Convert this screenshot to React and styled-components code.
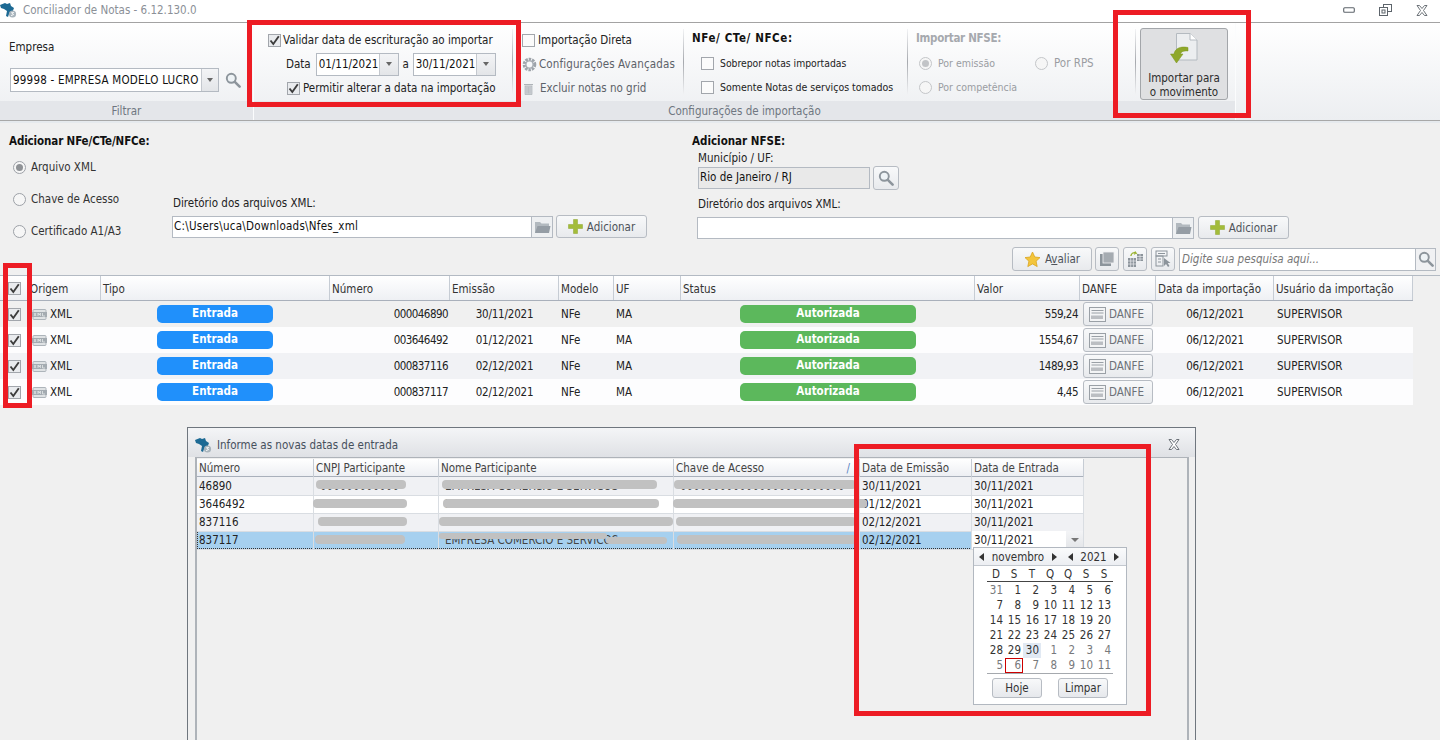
import React from "react";
import styled, { createGlobalStyle } from "styled-components";

const GlobalStyle = createGlobalStyle`
	html, body {
		margin: 0;
		padding: 0;
		height: 740px;
		overflow: hidden;
		background: #f0f0f0;
	}
	* {
		box-sizing: border-box;
	}
	body {
		font-family: "DejaVu Sans Condensed", "DejaVu Sans", "Liberation Sans", sans-serif;
		font-stretch: condensed;
		font-size: 11.5px;
		color: #222;
	}
`;

const Page = styled.div`
	position: relative;
	width: 1440px;
	height: 740px;
	overflow: hidden;
	background: #f0f0f0;
`;

const Label = styled.span`
	flex: none;
	display: inline-block;
	width: ${(p) => (p.$width ? `${p.$width}px` : "auto")};
	font-size: ${(p) => p.$size || 11.5}px;
	letter-spacing: ${(p) => p.$spacing || 0}px;
	text-align: ${(p) => p.$align || "left"};
`;

/* title bar */
const TitleBar = styled.div`
	height: 23px;
	display: flex;
	align-items: center;
	padding: 0 0 2px 0;
	background: #fff;
	border-bottom: 1px solid #a3a3a3;
`;

const TitleText = styled.span`
	margin-left: 6px;
	color: #8b9097;
	font-size: 11.5px;
`;

const WindowButtons = styled.div`
	margin-left: auto;
	display: flex;
	align-items: center;
	gap: 24px;
	padding-right: 12px;
`;

/* ribbon */
const Ribbon = styled.div`
	height: 98px;
	display: flex;
	background: linear-gradient(#fff, #eceef1);
	border-bottom: 1px solid #a8a8a8;
`;

const RibbonGroup = styled.div`
	width: ${(p) => p.$width}px;
	display: flex;
	flex-direction: column;
	border-right: 1px solid ${(p) => (p.$line ? "#fbfcfd" : "transparent")};
`;

const RibbonBody = styled.div`
	height: 78px;
	display: flex;
`;

const RibbonLabel = styled.div`
	height: 19px;
	line-height: 20px;
	text-align: center;
	color: #6f7681;
	background: #e4e6ea;
`;

const FilterColumn = styled.div`
	padding: 16px 0 0 9px;
`;

const FieldLabel = styled.div`
	color: #222;
	line-height: 17px;
	margin-top: ${(p) => p.$top || 0}px;
`;

const ComboRow = styled.div`
	display: flex;
	align-items: center;
	gap: 6px;
	margin-top: 12px;
`;

const Combo = styled.div`
	width: ${(p) => p.$width}px;
	height: ${(p) => p.$height || 24}px;
	display: flex;
	background: #fff;
	border: 1px solid #b4bac2;
	margin-left: ${(p) => p.$left || 0}px;
`;

const ComboText = styled.div`
	flex: 1;
	padding-left: 2px;
	line-height: ${(p) => p.$line || 22}px;
	letter-spacing: ${(p) => p.$spacing || 0}px;
	white-space: nowrap;
	overflow: hidden;
	color: #111;
`;

const ComboArrow = styled.div`
	width: ${(p) => p.$width || 17}px;
	display: flex;
	align-items: center;
	justify-content: center;
	background: linear-gradient(#f3f4f6, #e3e5e8);
	border-left: 1px solid #c4c8ce;
	&::after {
		content: "";
		border-left: 3.5px solid transparent;
		border-right: 3.5px solid transparent;
		border-top: 4px solid #666;
	}
`;

const RibbonColumn = styled.div`
	width: ${(p) => p.$width}px;
	padding: 5px 0 0 ${(p) => p.$pad || 0}px;
	position: relative;
	&::after {
		content: "";
		display: ${(p) => (p.$sep ? "block" : "none")};
		position: absolute;
		right: 0;
		top: 6px;
		bottom: 6px;
		width: 1px;
		background: linear-gradient(#f2f3f5, #a6a9ae 50%, #f2f3f5);
	}
`;

const rowTones = { muted: "#9a9da2", soft: "#5d6269" };

const RibbonRow = styled.div`
	height: 24px;
	display: flex;
	align-items: center;
	gap: ${(p) => p.$gap ?? 3}px;
	padding-left: ${(p) => p.$indent || 0}px;
	color: ${(p) => rowTones[p.$tone] || "#222"};
	white-space: nowrap;
`;

const GroupTitle = styled.div`
	height: 20px;
	line-height: 20px;
	font-weight: 700;
	letter-spacing: ${(p) => p.$spacing || 0}px;
	color: ${(p) => (p.$muted ? "#a6a9ae" : "#111")};
	margin-bottom: 3px;
`;

const CheckBox = styled.span`
	flex: none;
	width: 13px;
	height: 13px;
	display: inline-flex;
	align-items: center;
	justify-content: center;
	background: ${(p) => (p.$checked ? "#e9ebee" : "#fbfbfb")};
	border: 1px solid #a2a6ac;
`;

const Radio = styled.span`
	flex: none;
	width: 13px;
	height: 13px;
	border-radius: 50%;
	display: inline-flex;
	align-items: center;
	justify-content: center;
	background: #f6f6f6;
	border: 1px solid ${(p) => (p.$muted ? "#c4c6c9" : "#9da1a7")};
	&::after {
		content: "";
		display: ${(p) => (p.$on ? "block" : "none")};
		width: 7px;
		height: 7px;
		border-radius: 50%;
		background: ${(p) => (p.$muted ? "#c2c4c7" : "#8f9296")};
	}
`;

const ImportButton = styled.div`
	width: 88px;
	height: 72px;
	margin: 5px 0 0 4px;
	display: flex;
	flex-direction: column;
	align-items: center;
	padding-top: 4px;
	background: #dfe0e2;
	border: 1px solid #a3a6aa;
	border-radius: 3px;
	line-height: 14px;
	text-align: center;
	color: #2c2c2c;
	svg {
		margin-bottom: 7px;
	}
`;

const Band = styled.div`
	height: 2px;
	background: #e6eaee;
`;

/* add area */
const AddArea = styled.div`
	height: 124px;
	display: grid;
	grid-template-columns: 692px 1fr;
`;

const AddColumn = styled.div`
	padding: 10px 0 0 ${(p) => p.$pad || 0}px;
`;

const NfseFields = styled.div`
	padding: 1px 0 0 6px;
`;

const SectionTitle = styled.div`
	font-weight: 700;
	color: #111;
	line-height: 16px;
	letter-spacing: ${(p) => p.$spacing || 0}px;
`;

const SourceLayout = styled.div`
	display: flex;
`;

const SourceList = styled.div`
	width: 164px;
	padding: 2px 0 0 4px;
`;

const SourceRow = styled.div`
	height: 32px;
	display: flex;
	align-items: center;
	gap: 5px;
	color: #333;
`;

const DirectoryBlock = styled.div`
	padding-top: 46px;
`;

const InputRow = styled.div`
	display: flex;
	align-items: center;
	margin-top: ${(p) => p.$top || 0}px;
	margin-left: ${(p) => p.$left || 0}px;
`;

const TextInput = styled.div`
	width: ${(p) => p.$width}px;
	height: 22px;
	line-height: 19px;
	padding-left: 1px;
	letter-spacing: ${(p) => p.$spacing || 0}px;
	background: ${(p) => (p.$readOnly ? "#e9e9e9" : "#fff")};
	border: 1px solid #b4bac2;
	color: #111;
`;

const FolderButton = styled.div`
	width: 21px;
	height: 22px;
	display: flex;
	align-items: center;
	justify-content: center;
	background: #eef0f2;
	border: 1px solid #b4bac2;
	border-left: 0;
`;

const ToolButton = styled.div`
	flex: none;
	width: ${(p) => p.$width || 24}px;
	height: ${(p) => p.$height || 24}px;
	margin-left: ${(p) => p.$left || 0}px;
	margin-right: ${(p) => p.$right || 0}px;
	display: flex;
	align-items: center;
	justify-content: center;
	gap: 4px;
	background: linear-gradient(#f8f9fa, #e8eaed);
	border: 1px solid #b7bcc3;
	border-radius: 3px;
	color: #4e535a;
`;

const Toolbar = styled.div`
	height: 28px;
	display: flex;
	align-items: center;
	justify-content: flex-end;
	gap: 4px;
	padding: 0 4px 4px 0;
`;

const SearchBox = styled.div`
	width: 257px;
	height: 23px;
	display: flex;
	background: #fff;
	border: 1px solid #b4bac2;
`;

const SearchText = styled.div`
	flex: 1;
	padding-left: 2px;
	line-height: 20px;
	font-style: italic;
	color: #777;
`;

const SearchAction = styled.div`
	width: 20px;
	display: flex;
	align-items: center;
	justify-content: center;
	background: #f0f1f3;
	border-left: 1px solid #b4bac2;
`;

/* main table */
const mainColumns = "29px 72px 229px 120px 109px 55px 67px 294px 105px 76px 118px 139px";

const MainTable = styled.div`
	border-top: 1px solid #b3bac3;
`;

const MainHeader = styled.div`
	display: grid;
	grid-template-columns: ${mainColumns};
	width: 1413px;
	height: 25px;
	background: linear-gradient(#fff, #eef0f4);
	border-bottom: 1px solid #a9b0bb;
`;

const HeaderCell = styled.div`
	display: flex;
	align-items: center;
	padding: 1px 0 0 ${(p) => p.$pad ?? 2}px;
	border-right: 1px solid #c6ccd4;
	color: #333;
	white-space: nowrap;
`;

const MainRow = styled.div`
	display: grid;
	grid-template-columns: ${mainColumns};
	width: 1413px;
	height: 26px;
	background: ${(p) => p.$bg};
`;

const Cell = styled.div`
	display: flex;
	align-items: center;
	justify-content: ${(p) => p.$justify || "flex-start"};
	padding: 0 2px 0 ${(p) => p.$pad ?? 2}px;
	gap: 3px;
	letter-spacing: ${(p) => p.$spacing || 0}px;
	color: #222;
	white-space: nowrap;
`;

const Pill = styled.div`
	width: ${(p) => p.$width}px;
	height: 18px;
	margin-left: ${(p) => p.$left}px;
	line-height: 17px;
	text-align: center;
	font-weight: 700;
	color: #fff;
	border-radius: 5px;
	background: ${(p) => p.$color};
`;

const DanfeButton = styled(ToolButton)`
	color: #6d7278;
	margin-left: 1px;
	gap: 3px;
	padding-right: 3px;
`;

/* dialog */
const Dialog = styled.div`
	position: absolute;
	left: 187px;
	top: 427px;
	width: 1009px;
	height: 340px;
	background: #f0f0f0;
	border: 1px solid #6f767e;
`;

const DialogTitle = styled.div`
	height: 29px;
	display: flex;
	align-items: center;
	gap: 5px;
	padding: 4px 15px 0 7px;
	background: linear-gradient(#f4f5f7, #dfe1e5);
	color: #46505c;
	span {
		flex: 1;
	}
`;

const DialogFrame = styled.div`
	margin: 0 6px 0 7px;
	height: 300px;
	padding-top: 1px;
	background: #f0f0f0;
	border: 2px solid #aeb3b9;
	border-top-width: 1px;
	border-bottom: 0;
`;

const dialogColumns = "117px 125px 235px 186px 112px 112px";

const DialogHeader = styled.div`
	display: grid;
	grid-template-columns: ${dialogColumns};
	width: 887px;
	height: 18px;
	background: linear-gradient(#fff, #edeff3);
	border-bottom: 1px solid #a9b0bb;
`;

const DialogHeadCell = styled.div`
	padding: 0 3px 0 2px;
	line-height: 18px;
	border-right: 1px solid #c6ccd4;
	color: #444;
	display: flex;
	justify-content: space-between;
`;

const SortMark = styled.span`
	color: #5a86c4;
	padding-right: 6px;
`;

const DialogRow = styled.div`
	display: grid;
	grid-template-columns: ${dialogColumns};
	width: 887px;
	height: 18px;
	background: ${(p) => p.$bg};
	outline: ${(p) => (p.$active ? "1px dotted #333" : "none")};
	outline-offset: -1px;
`;

const DialogCell = styled.div`
	position: relative;
	padding: 0 3px 0 2px;
	line-height: 18px;
	white-space: nowrap;
	color: #222;
	border-right: 1px solid #d9dde2;
	border-bottom: 1px solid #d9dde2;
`;

const MaskedText = styled.span`
	display: block;
	overflow: hidden;
	padding-left: 4px;
	color: #444;
`;

const Blot = styled.span`
	position: absolute;
	z-index: 2;
	left: ${(p) => p.$left}px;
	top: ${(p) => p.$top}px;
	width: ${(p) => p.$width}px;
	height: ${(p) => p.$height || 9}px;
	border-radius: 4px;
	background: #c1c1c1;
`;

const EditorCell = styled(DialogCell)`
	background: #fff;
	display: flex;
	padding-right: 0;
`;

const EditorText = styled.span`
	flex: 1;
`;

const EditorArrow = styled.div`
	width: 17px;
	display: flex;
	align-items: center;
	justify-content: center;
	background: linear-gradient(#f3f4f6, #e3e5e8);
	&::after {
		content: "";
		border-left: 4px solid transparent;
		border-right: 4px solid transparent;
		border-top: 4px solid #777;
	}
`;

/* calendar popup */
const Calendar = styled.div`
	position: absolute;
	z-index: 3;
	left: 1px;
	top: 16px;
	width: 154px;
	height: 158px;
	background: #fff;
	border: 1px solid #b2b8c0;
	color: #333;
`;

const CalendarHead = styled.div`
	height: 18px;
	display: flex;
	align-items: center;
	gap: 11px;
	padding-left: 5px;
	background: linear-gradient(#fafbfc, #eceef2);
	border-bottom: 1px solid #c3c8cf;
`;

const Stepper = styled.div`
	display: flex;
	align-items: center;
	justify-content: space-between;
	width: ${(p) => p.$width}px;
`;

const Arrow = styled.i`
	display: block;
	flex: none;
	border-top: 4.5px solid transparent;
	border-bottom: 4.5px solid transparent;
	border-${(p) => (p.$left ? "right" : "left")}: 5px solid #333;
`;

const WeekGrid = styled.div`
	margin: 1px 13px 0;
	display: grid;
	grid-template-columns: repeat(7, 18px);
`;

const WeekHead = styled.div`
	height: 15px;
	line-height: 14px;
	text-align: center;
	border-bottom: 1px solid #444;
	margin-bottom: 1px;
`;

const Day = styled.div`
	height: 15px;
	line-height: 15px;
	padding-right: 2px;
	text-align: right;
	color: ${(p) => (p.$other ? "#77797c" : "#333")};
	background: ${(p) => (p.$selected ? "#e1e9f3" : "transparent")};
	outline: ${(p) => (p.$today ? "1px solid #cc0000" : "none")};
	outline-offset: -1px;
`;

const CalendarFoot = styled.div`
	margin: 0 13px;
	padding-top: 4px;
	border-top: 1px solid #a5a9ae;
	display: flex;
	justify-content: space-between;
`;

const CalendarButton = styled.div`
	margin: 0 5px;
	width: 50px;
	height: 20px;
	line-height: 18px;
	text-align: center;
	background: linear-gradient(#f8f9fa, #e6e8ec);
	border: 1px solid #b7bcc3;
	border-radius: 3px;
	color: #333;
`;

/* red marks drawn by hand over the screenshot */
const Annotation = styled.div`
	position: absolute;
	z-index: 5;
	left: ${(p) => p.$x}px;
	top: ${(p) => p.$y}px;
	width: ${(p) => p.$w}px;
	height: ${(p) => p.$h}px;
	border: 5px solid #ed1c24;
	pointer-events: none;
`;

const Tick = () => (
	<svg width="11" height="11" viewBox="0 0 11 11">
		<path d="M1.5 5.5 L4.3 9 L9.8 1.2" fill="none" stroke="#3d3d3d" strokeWidth="1.9" />
	</svg>
);

const Check = ({ checked }) => <CheckBox $checked={checked}>{checked && <Tick />}</CheckBox>;

const Logo = () => (
	<svg width="17" height="16" viewBox="0 0 17 16">
		<path d="M0 3 L5 1 L7 2 L10 1 L11 4 L14 6 L12 11 L9 12 L8 15 L6 14 L7 9 L4 7 L1 6 Z" fill="#1d6a94" />
		<circle cx="12.5" cy="12" r="3.6" fill="#a8b4bc" />
		<path d="M14 10.6 L11.5 10.8 L13.6 12.6 L11 13.6" fill="none" stroke="#fff" strokeWidth="0.9" />
	</svg>
);

const Search = ({ size = 16, color = "#8d959c" }) => (
	<svg width={size} height={size} viewBox="0 0 16 16">
		<circle cx="6.3" cy="6.3" r="4.5" fill="#eef3f6" stroke={color} strokeWidth="1.9" />
		<path d="M9.8 9.8 L14.6 14.6" stroke={color} strokeWidth="2.6" strokeLinecap="round" />
	</svg>
);

const Plus = () => (
	<svg width="15" height="15" viewBox="0 0 15 15">
		<path d="M5.5 0.5 H9.5 V5.5 H14.5 V9.5 H9.5 V14.5 H5.5 V9.5 H0.5 V5.5 H5.5 Z" fill="#a3bc3a" stroke="#8ca52c" strokeWidth="0.5" />
	</svg>
);

const Folder = () => (
	<svg width="17" height="14" viewBox="0 0 17 14">
		<path d="M1 2 H6 L7.5 3.5 H15 V13 H1 Z" fill="#b2b9bf" />
		<path d="M1 13 L3.5 6 H16.5 L15 13 Z" fill="#959da5" />
	</svg>
);

const Gear = () => (
	<svg width="15" height="15" viewBox="0 0 15 15">
		<circle cx="7.5" cy="7.5" r="5.2" fill="none" stroke="#9ea4aa" strokeWidth="3.2" strokeDasharray="2.4 0.9" />
		<circle cx="7.5" cy="7.5" r="3.6" fill="none" stroke="#a9afb5" strokeWidth="1.4" />
	</svg>
);

const Trash = () => (
	<svg width="13" height="13" viewBox="0 0 13 13">
		<path d="M2 2 H11 V3.2 H2 Z" fill="#aeb3b8" />
		<path d="M3 4 H10 V12.5 H3 Z" fill="#ccd0d4" stroke="#aeb3b8" strokeWidth="0.7" />
		<path d="M5 5 V11.5 M6.5 5 V11.5 M8 5 V11.5" stroke="#aeb3b8" strokeWidth="0.6" />
	</svg>
);

const ImportDoc = () => (
	<svg width="28" height="31" viewBox="0 0 28 31">
		<path d="M6.5 0.5 H20 L27 7 V27 H6.5 Z" fill="#eceef0" stroke="#b4bac0" />
		<path d="M20 0.5 V7 H27" fill="#fff" stroke="#b4bac0" />
		<path d="M18 14.5 L18 18 C14 17.5 11 18.5 10.5 21 H13 L6.5 30 L0.5 21 H4 C5 15 11 13 18 14.5 Z" fill="#8fa82a" stroke="#7a941f" strokeWidth="0.5" />
	</svg>
);

const Star = () => (
	<svg width="17" height="17" viewBox="0 0 17 17">
		<path d="M8.5 1 L10.8 6 L16 6.6 L12.1 10.2 L13.2 15.6 L8.5 12.9 L3.8 15.6 L4.9 10.2 L1 6.6 L6.2 6 Z" fill="#f3c53c" stroke="#d9a41f" strokeWidth="0.8" />
	</svg>
);

const CopyIcon = () => (
	<svg width="16" height="16" viewBox="0 0 16 16">
		<rect x="1" y="3" width="11" height="12" fill="#8c949b" />
		<rect x="4" y="1" width="11" height="11" fill="#a5abb1" stroke="#f0f1f3" strokeWidth="0.8" />
	</svg>
);

const GridIcon = () => (
	<svg width="17" height="17" viewBox="0 0 17 17">
		<path d="M1 7 H9 V16 H1 Z M10 3 H16 V10 H10 Z" fill="#8c949b" />
		<path d="M1 10 H9 M1 13 H9 M3.7 7 V16 M6.4 7 V16 M10 5.5 H16 M10 8 H16 M13 3 V10" stroke="#e8eaed" strokeWidth="0.7" />
		<path d="M4 5 C4 2 7 1 9 2 L8 0.5 M9 2 L7 3.2" fill="none" stroke="#9ab32f" strokeWidth="1.3" />
	</svg>
);

const PickIcon = () => (
	<svg width="17" height="18" viewBox="0 0 17 18">
		<rect x="1" y="1" width="11" height="5" fill="none" stroke="#8c949b" />
		<rect x="1" y="6" width="7" height="10" fill="none" stroke="#8c949b" />
		<path d="M3 3.5 H10 M3 9 H6 M3 12 H6" stroke="#8c949b" />
		<path d="M9 8 L9 16 L11 14 L13 17 L14.5 16 L12.7 13 L15.5 13 Z" fill="#8c949b" />
	</svg>
);

const XmlIcon = () => (
	<svg width="15" height="11" viewBox="0 0 15 11">
		<rect x="1" y="0.5" width="13" height="10" rx="1" fill="#dfe2e4" stroke="#adb4ba" />
		<rect x="0" y="3" width="15" height="5" fill="#a4abb1" />
		<path d="M2 4 L4 7 M4 4 L2 7 M6 7 V4 L7.2 6 L8.4 4 V7 M10.5 4 V7 H13" stroke="#eef0f1" strokeWidth="0.7" fill="none" />
	</svg>
);

const DanfeIcon = () => (
	<svg width="17" height="15" viewBox="0 0 17 15">
		<rect x="0.5" y="0.5" width="16" height="14" fill="#f3f4f5" stroke="#9aa0a6" />
		<path d="M2.5 3.5 H14.5 M2.5 6 H14.5" stroke="#9aa0a6" />
		<path d="M3 12 V8.5 M5 12 V8.5 M7 12 V8.5 M9 12 V8.5 M11 12 V8.5 M13 12 V8.5" stroke="#8c9298" strokeWidth="1.1" />
	</svg>
);

const Minimize = () => (
	<svg width="12" height="6" viewBox="0 0 12 6">
		<rect x="0.7" y="0.7" width="10.6" height="4.6" rx="1" fill="#fff" stroke="#5d646b" strokeWidth="1.1" />
	</svg>
);

const Restore = () => (
	<svg width="13" height="12" viewBox="0 0 13 12">
		<rect x="4.5" y="0.5" width="8" height="7" fill="#fff" stroke="#5d646b" />
		<rect x="0.5" y="3.5" width="8" height="8" fill="#fff" stroke="#5d646b" />
		<rect x="3" y="6" width="3" height="3" fill="none" stroke="#5d646b" />
	</svg>
);

const CloseIcon = () => (
	<svg width="12" height="11" viewBox="0 0 12 11">
		<path d="M1 0.5 H3.5 L6 3.5 L8.5 0.5 H11 L7.5 5.5 L11 10.5 H8.5 L6 7.5 L3.5 10.5 H1 L4.5 5.5 Z" fill="#fff" stroke="#5d646b" strokeWidth="0.9" />
	</svg>
);

const notes = [
	{ numero: "000046890", emissao: "30/11/2021", valor: "559,24", bg: "#f0f0f0" },
	{ numero: "003646492", emissao: "01/12/2021", valor: "1554,67", bg: "#fdfdfe" },
	{ numero: "000837116", emissao: "02/12/2021", valor: "1489,93", bg: "#f1f2f5" },
	{ numero: "000837117", emissao: "02/12/2021", valor: "4,45", bg: "#fdfdfe" },
];

const participantes = [
	{
		numero: "46890",
		emissao: "30/11/2021",
		bg: "#f0f1f4",
		cnpj: [{ left: 2, top: 3, width: 90 }],
		nome: [{ left: 3, top: 3, width: 215 }],
		chave: [{ left: 0, top: 3, width: 182 }],
	},
	{
		numero: "3646492",
		emissao: "01/12/2021",
		bg: "#fff",
		cnpj: [{ left: -1, top: 4, width: 94 }],
		nome: [{ left: 4, top: 4, width: 216 }],
		chave: [{ left: -1, top: 4, width: 194 }],
	},
	{
		numero: "837116",
		emissao: "02/12/2021",
		bg: "#f0f1f4",
		cnpj: [{ left: 4, top: 4, width: 89 }],
		nome: [{ left: 0, top: 4, width: 234 }],
		chave: [{ left: 2, top: 4, width: 180 }],
	},
	{
		numero: "837117",
		emissao: "02/12/2021",
		bg: "#a6d0ef",
		active: true,
		cnpj: [{ left: 1, top: 4, width: 90 }],
		nome: [
			{ left: 0, top: 2, width: 168, height: 6 },
			{ left: 167, top: 6, width: 61, height: 7 },
		],
		chave: [{ left: 3, top: 4, width: 180 }],
	},
];

const weekDays = ["D", "S", "T", "Q", "Q", "S", "S"];

const days = [
	[31, true], [1], [2], [3], [4], [5], [6],
	[7], [8], [9], [10], [11], [12], [13],
	[14], [15], [16], [17], [18], [19], [20],
	[21], [22], [23], [24], [25], [26], [27],
	[28], [29], [30, false, "selected"], [1, true], [2, true], [3, true], [4, true],
	[5, true], [6, true, "today"], [7, true], [8, true], [9, true], [10, true], [11, true],
];

const Masked = ({ text, blots }) => (
	<DialogCell>
		<MaskedText>{text}</MaskedText>
		{blots.map((b, idx) => (
			<Blot key={idx} $left={b.left} $top={b.top} $width={b.width} $height={b.height} />
		))}
	</DialogCell>
);

export default function App() {
	return (
		<Page>
			<GlobalStyle />
			<TitleBar>
				<Logo />
				<TitleText>Conciliador de Notas - 6.12.130.0</TitleText>
				<WindowButtons>
					<Minimize />
					<Restore />
					<CloseIcon />
				</WindowButtons>
			</TitleBar>

			<Ribbon>
				<RibbonGroup $width={254} $line>
					<RibbonBody>
						<FilterColumn>
							<FieldLabel>Empresa</FieldLabel>
							<ComboRow>
								<Combo $width={209} $left={1}>
									<ComboText $spacing={0.22}>99998 - EMPRESA MODELO LUCRO</ComboText>
									<ComboArrow />
								</Combo>
								<Search />
							</ComboRow>
						</FilterColumn>
					</RibbonBody>
					<RibbonLabel>Filtrar</RibbonLabel>
				</RibbonGroup>

				<RibbonGroup $width={982} $line>
					<RibbonBody>
						<RibbonColumn $width={259} $pad={14} $sep>
							<RibbonRow $gap={2}>
								<Check checked />
								<Label>Validar data de escrituração ao importar</Label>
							</RibbonRow>
							<RibbonRow $indent={18} $gap={0}>
								<Label>Data</Label>
								<Combo $width={83} $height={23} $left={5}>
									<ComboText $line={20}>01/11/2021</ComboText>
									<ComboArrow $width={19} />
								</Combo>
								<Label $width={14} $align="center">a</Label>
								<Combo $width={83} $height={23}>
									<ComboText $line={20}>30/11/2021</ComboText>
									<ComboArrow $width={19} />
								</Combo>
							</RibbonRow>
							<RibbonRow $indent={19}>
								<Check checked />
								<Label>Permitir alterar a data na importação</Label>
							</RibbonRow>
						</RibbonColumn>

						<RibbonColumn $width={171} $pad={9} $sep>
							<RibbonRow>
								<Check />
								<Label>Importação Direta</Label>
							</RibbonRow>
							<RibbonRow $tone="soft" $gap={2}>
								<Gear />
								<Label $spacing={0.12}>Configurações Avançadas</Label>
							</RibbonRow>
							<RibbonRow $tone="soft" $gap={5}>
								<Trash />
								<Label>Excluir notas no grid</Label>
							</RibbonRow>
						</RibbonColumn>

						<RibbonColumn $width={224} $pad={8} $sep>
							<GroupTitle $spacing={0.6}>NFe/ CTe/ NFCe:</GroupTitle>
							<RibbonRow $indent={9} $gap={6}>
								<Check />
								<Label $size={10.3}>Sobrepor notas importadas</Label>
							</RibbonRow>
							<RibbonRow $indent={9} $gap={6}>
								<Check />
								<Label $size={10.5}>Somente Notas de serviços tomados</Label>
							</RibbonRow>
						</RibbonColumn>

						<RibbonColumn $width={228} $pad={8} $sep>
							<GroupTitle $muted $spacing={-0.3}>Importar NFSE:</GroupTitle>
							<RibbonRow $tone="muted" $indent={3} $gap={6}>
								<Radio $muted $on />
								<Label $width={91} $size={10.5}>Por emissão</Label>
								<Radio $muted />
								<Label>Por RPS</Label>
							</RibbonRow>
							<RibbonRow $tone="muted" $indent={3} $gap={6}>
								<Radio $muted />
								<Label $size={10.5}>Por competência</Label>
							</RibbonRow>
						</RibbonColumn>

						<ImportButton>
							<ImportDoc />
							Importar para
							<br />o movimento
						</ImportButton>
					</RibbonBody>
					<RibbonLabel>Configurações de importação</RibbonLabel>
				</RibbonGroup>
			</Ribbon>
			<Band />

			<AddArea>
				<AddColumn $pad={9}>
					<SectionTitle $spacing={-0.12}>Adicionar NFe/CTe/NFCe:</SectionTitle>
					<SourceLayout>
						<SourceList>
							<SourceRow>
								<Radio $on />
								Arquivo XML
							</SourceRow>
							<SourceRow>
								<Radio />
								Chave de Acesso
							</SourceRow>
							<SourceRow>
								<Radio />
								Certificado A1/A3
							</SourceRow>
						</SourceList>
						<DirectoryBlock>
							<FieldLabel>Diretório dos arquivos XML:</FieldLabel>
							<InputRow $top={3} $left={-1}>
								<TextInput $width={360} $spacing={0.25}>C:\Users\uca\Downloads\Nfes_xml</TextInput>
								<FolderButton>
									<Folder />
								</FolderButton>
								<ToolButton $width={91} $height={23} $left={3}>
									<Plus />
									Adicionar
								</ToolButton>
							</InputRow>
						</DirectoryBlock>
					</SourceLayout>
				</AddColumn>

				<AddColumn>
					<SectionTitle>Adicionar NFSE:</SectionTitle>
					<NfseFields>
						<FieldLabel>Município / UF:</FieldLabel>
						<InputRow $top={-1}>
							<TextInput $width={172} $readOnly>Rio de Janeiro / RJ</TextInput>
							<ToolButton $width={26} $left={3}>
								<Search />
							</ToolButton>
						</InputRow>
						<FieldLabel $top={6}>Diretório dos arquivos XML:</FieldLabel>
						<InputRow $top={3} $left={-1}>
							<TextInput $width={476} />
							<FolderButton>
								<Folder />
							</FolderButton>
							<ToolButton $width={91} $height={23} $left={4}>
								<Plus />
								Adicionar
							</ToolButton>
						</InputRow>
					</NfseFields>
				</AddColumn>
			</AddArea>

			<Toolbar>
				<ToolButton $width={80} $right={-1}>
					<Star />
					<span>
						A<u>v</u>aliar
					</span>
				</ToolButton>
				<ToolButton>
					<CopyIcon />
				</ToolButton>
				<ToolButton>
					<GridIcon />
				</ToolButton>
				<ToolButton>
					<PickIcon />
				</ToolButton>
				<SearchBox>
					<SearchText>Digite sua pesquisa aqui...</SearchText>
					<SearchAction>
						<Search size={16} />
					</SearchAction>
				</SearchBox>
			</Toolbar>

			<MainTable>
				<MainHeader>
					<HeaderCell $pad={8}>
						<Check checked />
					</HeaderCell>
					<HeaderCell $pad={1}>Origem</HeaderCell>
					<HeaderCell>Tipo</HeaderCell>
					<HeaderCell>Número</HeaderCell>
					<HeaderCell>Emissão</HeaderCell>
					<HeaderCell>Modelo</HeaderCell>
					<HeaderCell>UF</HeaderCell>
					<HeaderCell>Status</HeaderCell>
					<HeaderCell>Valor</HeaderCell>
					<HeaderCell>DANFE</HeaderCell>
					<HeaderCell>Data da importação</HeaderCell>
					<HeaderCell>Usuário da importação</HeaderCell>
				</MainHeader>
				{notes.map((note) => (
					<MainRow key={note.numero} $bg={note.bg}>
						<Cell $pad={8}>
							<Check checked />
						</Cell>
						<Cell $pad={3}>
							<XmlIcon />
							<Label>XML</Label>
						</Cell>
						<Cell>
							<Pill $width={116} $left={54} $color="#2090fb">Entrada</Pill>
						</Cell>
						<Cell $justify="flex-end" $spacing={-0.55}>{note.numero}</Cell>
						<Cell $justify="center" $spacing={-0.2}>{note.emissao}</Cell>
						<Cell>NFe</Cell>
						<Cell>MA</Cell>
						<Cell>
							<Pill $width={176} $left={57} $color="#5cb85c">Autorizada</Pill>
						</Cell>
						<Cell $justify="flex-end" $spacing={-0.5}>{note.valor}</Cell>
						<Cell>
							<DanfeButton $width={70}>
								<DanfeIcon />
								DANFE
							</DanfeButton>
						</Cell>
						<Cell $justify="center" $spacing={-0.2}>06/12/2021</Cell>
						<Cell $pad={3}>SUPERVISOR</Cell>
					</MainRow>
				))}
			</MainTable>

			<Dialog>
				<DialogTitle>
					<Logo />
					<span>Informe as novas datas de entrada</span>
					<CloseIcon />
				</DialogTitle>
				<DialogFrame>
					<DialogHeader>
						<DialogHeadCell>Número</DialogHeadCell>
						<DialogHeadCell>CNPJ Participante</DialogHeadCell>
						<DialogHeadCell>Nome Participante</DialogHeadCell>
						<DialogHeadCell>
							Chave de Acesso
							<SortMark>/</SortMark>
						</DialogHeadCell>
						<DialogHeadCell>Data de Emissão</DialogHeadCell>
						<DialogHeadCell>Data de Entrada</DialogHeadCell>
					</DialogHeader>
					{participantes.map((item) => (
						<DialogRow key={item.numero} $bg={item.bg} $active={item.active}>
							<DialogCell>{item.numero}</DialogCell>
							<Masked text="000000000000" blots={item.cnpj} />
							<Masked text="EMPRESA COMERCIO E SERVICOS" blots={item.nome} />
							<Masked text="0000000000000000000000000" blots={item.chave} />
							<DialogCell>{item.emissao}</DialogCell>
							{item.active ? (
								<EditorCell>
									<EditorText>30/11/2021</EditorText>
									<EditorArrow />
									<Calendar>
										<CalendarHead>
											<Stepper $width={78}>
												<Arrow $left />
												<span>novembro</span>
												<Arrow />
											</Stepper>
											<Stepper $width={51}>
												<Arrow $left />
												<span>2021</span>
												<Arrow />
											</Stepper>
										</CalendarHead>
										<WeekGrid>
											{weekDays.map((d, idx) => (
												<WeekHead key={idx}>{d}</WeekHead>
											))}
											{days.map(([n, other, mark], idx) => (
												<Day
													key={idx}
													$other={other}
													$selected={mark === "selected"}
													$today={mark === "today"}
												>
													{n}
												</Day>
											))}
										</WeekGrid>
										<CalendarFoot>
											<CalendarButton>Hoje</CalendarButton>
											<CalendarButton>Limpar</CalendarButton>
										</CalendarFoot>
									</Calendar>
								</EditorCell>
							) : (
								<DialogCell>30/11/2021</DialogCell>
							)}
						</DialogRow>
					))}
				</DialogFrame>
			</Dialog>

			<Annotation $x={247} $y={20} $w={274} $h={87} />
			<Annotation $x={1113} $y={10} $w={138} $h={108} />
			<Annotation $x={3} $y={263} $w={29} $h={145} />
			<Annotation $x={854} $y={444} $w={297} $h={272} />
		</Page>
	);
}
